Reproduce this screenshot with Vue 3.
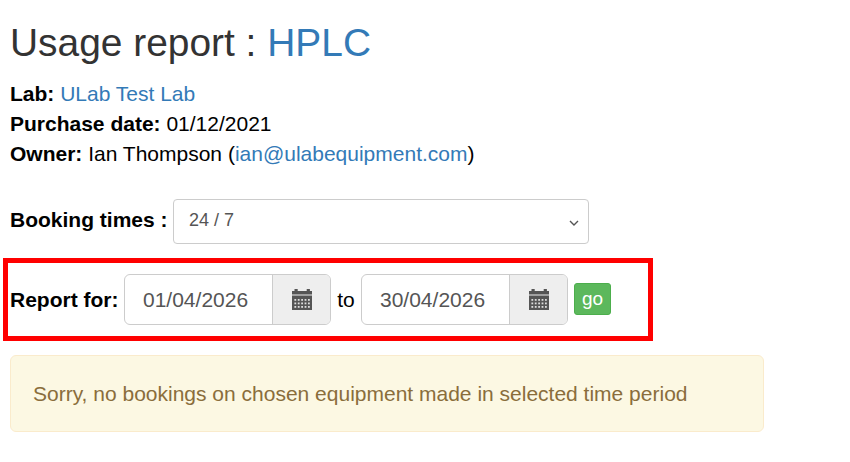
<template>
  <div class="page">
    <h1 class="title">Usage report : <a href="#">HPLC</a></h1>

    <div class="details">
      <div><strong>Lab:</strong> <a href="#">ULab Test Lab</a></div>
      <div><strong>Purchase date:</strong> 01/12/2021</div>
      <div><strong>Owner:</strong> Ian Thompson (<a href="#">ian@ulabequipment.com</a>)</div>
    </div>

    <div class="booking-row">
      <label>Booking times :</label>
      <div class="select-box">
        <span>24 / 7</span>
        <svg class="chevron" viewBox="0 0 10 6" width="10" height="6">
          <path d="M1 1l4 4 4-4" fill="none" stroke="#555" stroke-width="1.4" />
        </svg>
      </div>
    </div>

    <div class="report-box">
      <label>Report for:</label>
      <div class="date-group" v-for="(d, i) in dates" :key="d">
        <span v-if="i === 1" class="to">to</span>
        <div class="date-input">
          <span class="date-text">{{ d }}</span>
          <span class="date-addon">
            <svg viewBox="0 0 20 21" width="20" height="21">
              <path fill="#555" d="M2.500 0h3.200v2h9v-2h3.200v2h2.100v3.500h-20v-3.500h2.500z" />
              <rect fill="#555" y="6.500" width="20" height="14.500" />
              <g v-for="y in dotRows" :key="y">
                <rect v-for="x in dotCols" :key="x" fill="#ddd" :x="x" :y="y" width="1.800" height="1.800" />
              </g>
            </svg>
          </span>
        </div>
      </div>
      <button class="go">go</button>
    </div>

    <div class="alert">Sorry, no bookings on chosen equipment made in selected time period</div>
  </div>
</template>

<script setup>
const dates = ["01/04/2026", "30/04/2026"];

// calendar icon grid
const dotCols = [2.4, 5.8, 9.2, 12.6, 16];
const dotRows = [10, 13.5, 17];
</script>

<style>
body {
  background: #fff;
}
</style>

<style scoped>
.page {
  padding: 0 10px;
  font-family: "Liberation Sans", Arial, sans-serif;
  font-size: 21px;
  line-height: 30px;
  color: #000;
}

a {
  color: #337ab7;
  text-decoration: none;
}

.title {
  margin: 0;
  padding-top: 22px;
  font-size: 38.9px;
  font-weight: 400;
  line-height: 42px;
  color: #333;
}

.details {
  margin-top: 15px;
}

label {
  font-weight: 700;
}

.booking-row {
  display: flex;
  align-items: center;
  margin-top: 30px;
}

.booking-row label {
  width: 163px;
  margin-top: -3px;
}

.select-box {
  display: flex;
  align-items: center;
  justify-content: space-between;
  box-sizing: border-box;
  width: 416px;
  height: 45px;
  padding: 0 15px 3px;
  border: 1px solid #ccc;
  border-radius: 4px;
  font-size: 18px;
  color: #555;
}

.chevron {
  margin-right: -6px;
  margin-top: 5px;
}

.report-box {
  display: flex;
  align-items: center;
  box-sizing: border-box;
  width: 650px;
  height: 83px;
  margin: 14px 0 0 -7px;
  padding: 0 0 0 2px;
  border: 5px solid #f00;
}

.report-box label {
  width: 114px;
}

.date-group {
  display: flex;
  align-items: center;
}

.to {
  width: 30px;
  text-align: center;
}

.date-input {
  display: flex;
  box-sizing: border-box;
  width: 207px;
  height: 51px;
  border: 1px solid #ccc;
  border-radius: 6px;
  font-size: 21px;
  color: #555;
  overflow: hidden;
}

.date-text {
  flex: 1;
  padding-left: 18px;
  line-height: 49px;
}

.date-addon {
  display: flex;
  align-items: center;
  justify-content: center;
  box-sizing: border-box;
  width: 58px;
  background: #eee;
  border-left: 1px solid #ccc;
}

.go {
  box-sizing: border-box;
  width: 37px;
  height: 32px;
  margin: -1px 0 0 6px;
  padding: 0;
  background: #5cb85c;
  border: 1px solid #4cae4c;
  border-radius: 3px;
  color: #fff;
  font-family: inherit;
  font-size: 19px;
}

.alert {
  box-sizing: border-box;
  width: 754px;
  height: 77px;
  margin-top: 14px;
  padding: 0 22px;
  background: #fcf8e3;
  border: 1px solid #faebcc;
  border-radius: 6px;
  color: #8a6d3b;
  line-height: 75px;
}
</style>
